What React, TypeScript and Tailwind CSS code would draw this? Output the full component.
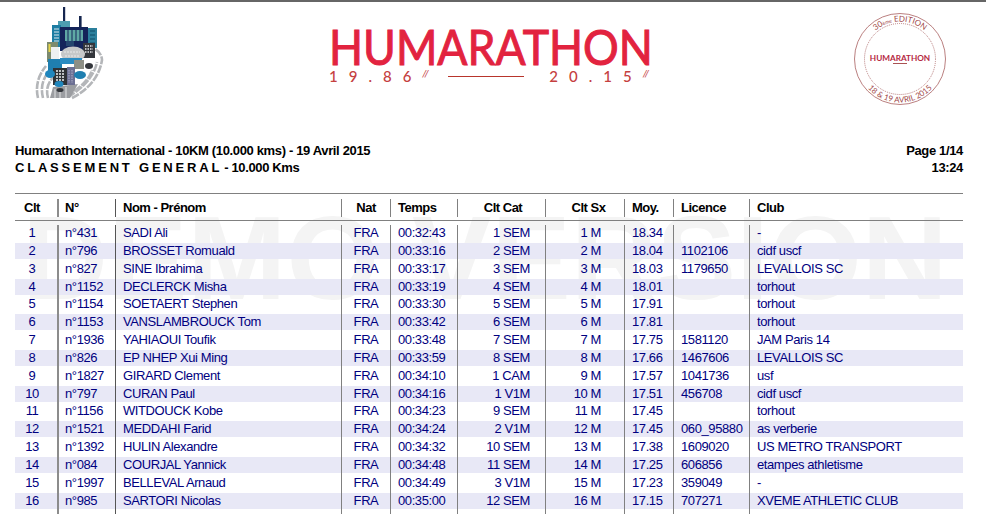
const rows = [
  ['1', 'n°431', 'SADI Ali', '00:32:43', '1 SEM', '1 M', '18.34', '', '-'],
  ['2', 'n°796', 'BROSSET Romuald', '00:33:16', '2 SEM', '2 M', '18.04', '1102106', 'cidf uscf'],
  ['3', 'n°827', 'SINE Ibrahima', '00:33:17', '3 SEM', '3 M', '18.03', '1179650', 'LEVALLOIS SC'],
  ['4', 'n°1152', 'DECLERCK Misha', '00:33:19', '4 SEM', '4 M', '18.01', '', 'torhout'],
  ['5', 'n°1154', 'SOETAERT Stephen', '00:33:30', '5 SEM', '5 M', '17.91', '', 'torhout'],
  ['6', 'n°1153', 'VANSLAMBROUCK Tom', '00:33:42', '6 SEM', '6 M', '17.81', '', 'torhout'],
  ['7', 'n°1936', 'YAHIAOUI Toufik', '00:33:48', '7 SEM', '7 M', '17.75', '1581120', 'JAM Paris 14'],
  ['8', 'n°826', 'EP NHEP Xui Ming', '00:33:59', '8 SEM', '8 M', '17.66', '1467606', 'LEVALLOIS SC'],
  ['9', 'n°1827', 'GIRARD Clement', '00:34:10', '1 CAM', '9 M', '17.57', '1041736', 'usf'],
  ['10', 'n°797', 'CURAN Paul', '00:34:16', '1 V1M', '10 M', '17.51', '456708', 'cidf uscf'],
  ['11', 'n°1156', 'WITDOUCK Kobe', '00:34:23', '9 SEM', '11 M', '17.45', '', 'torhout'],
  ['12', 'n°1521', 'MEDDAHI Farid', '00:34:24', '2 V1M', '12 M', '17.45', '060_95880', 'as verberie'],
  ['13', 'n°1392', 'HULIN Alexandre', '00:34:32', '10 SEM', '13 M', '17.38', '1609020', 'US METRO TRANSPORT'],
  ['14', 'n°084', 'COURJAL Yannick', '00:34:48', '11 SEM', '14 M', '17.25', '606856', 'etampes athletisme'],
  ['15', 'n°1997', 'BELLEVAL Arnaud', '00:34:49', '3 V1M', '15 M', '17.23', '359049', '-'],
  ['16', 'n°985', 'SARTORI Nicolas', '00:35:00', '12 SEM', '16 M', '17.15', '707271', 'XVEME ATHLETIC CLUB'],
];

const gridCols = 'grid grid-cols-[42px_58px_226px_49px_67px_88px_79px_49px_76px_214px]';
const sep = 'border-l border-[#808080]';
const sepThick = 'border-l-2 border-[#8c8c8c]';
const sepDark = 'border-l border-[#555]';

function CityLogo() {
  return (
    <svg viewBox="30 2 80 105" className="w-[80px] h-[105px]">
      {/* road swirl */}
      <g fill="none" stroke="#b4b6b9" strokeWidth="2.6" strokeDasharray="8 1.2">
        <path d="M38 98 C36 90 36 78 46 66" />
        <path d="M43 98 C41 90 41 80 50 70" />
        <path d="M48 98 C46 90 47 84 54 76" />
        <path d="M72 98 C84 92 99 80 102 60 C102 56 99 51 95 49" />
        <path d="M68 97 C80 90 94 78 97 62" />
        <path d="M74 91 C82 86 90 78 92 70" />
      </g>
      <path d="M50 98 L53 87 L78 84 L70 98 Z" fill="#9b9da1" />
      <path d="M55 98 V89 M60 98 V88 M66 98 V87" stroke="#e2e3e4" strokeWidth="1" />
      {/* antennas */}
      <rect x="63" y="7" width="2.2" height="24" fill="#16264f" />
      <rect x="79" y="16" width="2.6" height="16" fill="#16264f" />
      {/* back row */}
      <rect x="58" y="21" width="12" height="7" fill="#4d9db0" />
      <rect x="52" y="25" width="9" height="22" fill="#1d7da3" />
      <path d="M54 29 h5 M54 32 h5 M54 35 h5 M54 38 h5 M54 41 h5" stroke="#dbe8ee" strokeWidth="1.2" />
      <rect x="60" y="27" width="28" height="24" fill="#14245a" />
      <rect x="65" y="30" width="18" height="11" fill="#5fa8a4" />
      <path d="M68 30 v11 M72 30 v11 M76 30 v11 M80 30 v11" stroke="#14245a" strokeWidth="1" />
      <rect x="66" y="41" width="8" height="5" fill="#24466f" />
      <rect x="88" y="28" width="9" height="20" fill="#2b7f9c" />
      <path d="M90 31 h5 M90 35 h5 M90 39 h5 M90 43 h5" stroke="#0f4d66" strokeWidth="1.2" />
      {/* middle row */}
      <rect x="47" y="42" width="11" height="20" fill="#7c8a6e" />
      <rect x="48.5" y="44" width="2" height="8" fill="#e8d54a" />
      <rect x="51" y="47" width="8" height="13" fill="#eef0f1" />
      <rect x="83" y="43" width="12" height="15" fill="#33363b" />
      <path d="M85 46 h8 M85 49 h8 M85 52 h8" stroke="#e6e8ea" strokeWidth="1.3" strokeDasharray="1.5 1" />
      <ellipse cx="73" cy="54" rx="12" ry="7.5" fill="#c6c8c9" />
      <path d="M64 52 h16 M65 56 h15" stroke="#e8e9ea" strokeWidth="1" strokeDasharray="2 1" />
      {/* front row */}
      <rect x="48" y="59" width="14" height="13" fill="#1f7fb0" />
      <rect x="60" y="58" width="22" height="6" fill="#2b8cc2" />
      <rect x="74" y="60" width="10" height="9" fill="#8d8f86" />
      <rect x="53" y="68" width="14" height="17" fill="#2f3236" />
      <path d="M56 71 h8 M56 74 h8 M56 77 h8 M56 80 h8" stroke="#eceef0" strokeWidth="1.4" strokeDasharray="2 1" />
      <rect x="67" y="67" width="8" height="18" fill="#6c6f93" />
      <path d="M69 70 v13 M72 70 v13" stroke="#c5c7da" strokeWidth="0.8" strokeDasharray="1.5 1" />
      <ellipse cx="80" cy="75" rx="6" ry="4" fill="#1f7fb0" />
      <ellipse cx="89" cy="66" rx="4" ry="3" fill="#33363b" />
      <ellipse cx="50" cy="74" rx="5" ry="4" fill="#1f86bd" />
      <ellipse cx="59" cy="84" rx="4.5" ry="3" fill="#1f86bd" />
      <ellipse cx="60" cy="90" rx="3.5" ry="2" fill="#33363b" />
    </svg>
  );
}

function MainLogo() {
  return (
    <div className="w-[320px] text-[#e2233f] font-['Lato',sans-serif]">
      <div className="text-[48px] leading-[40px] h-[40px] font-normal origin-left scale-x-[0.93] [-webkit-text-stroke:1px_#e2233f] whitespace-nowrap">HUMARATHON</div>
      <div className="flex items-center mt-[2px] text-[#c5403f] text-[15px] leading-[15px] font-medium">
        <span className="w-[119px] tracking-[11px] whitespace-nowrap">19.86<sup className="text-[10px] tracking-[0] italic font-normal">//</sup></span>
        <span className="w-[77px] h-px bg-[#b8352c]" />
        <span className="ml-[25px] tracking-[11px] whitespace-nowrap">20.15<sup className="text-[10px] tracking-[0] italic font-normal">//</sup></span>
      </div>
    </div>
  );
}

function Stamp() {
  return (
    <svg viewBox="0 0 94 94" className="w-[94px] h-[94px] font-['Lato',sans-serif]">
      <defs>
        <path id="stamp-top" d="M9.5 47 A37.5 37.5 0 0 1 84.5 47" />
        <path id="stamp-bottom" d="M3.5 47 A43.5 43.5 0 0 0 90.5 47" />
      </defs>
      <circle cx="47" cy="47" r="45.5" fill="none" stroke="#a8605f" strokeWidth="0.8" />
      <circle cx="47" cy="47" r="35.5" fill="none" stroke="#b87c7c" strokeWidth="1" strokeDasharray="1 1" />
      <text fontSize="8" fill="#a04848">
        <textPath href="#stamp-top" startOffset="50%" textAnchor="middle">
          30<tspan fontSize="5">ème</tspan> EDITION
        </textPath>
      </text>
      <text fontSize="8" fill="#a04848">
        <textPath href="#stamp-bottom" startOffset="50%" textAnchor="middle">18 &amp; 19 AVRIL 2015</textPath>
      </text>
      <text x="47" y="49" fontSize="8.2" fontWeight="700" textAnchor="middle" fill="#b5283f">HUMARATHON</text>
      <rect x="40" y="51" width="14" height="0.9" fill="#a04040" />
    </svg>
  );
}

export default function App() {
  return (
    <div className="w-[986px] h-[514px] overflow-hidden bg-white font-['Liberation_Sans',Arial,sans-serif] text-black border-t-2 border-[#666]">
      {/* logos */}
      <div className="flex h-[140px] items-start">
        <div className="ml-[30px] w-[299px]"><CityLogo /></div>
        <div className="mt-[25px] w-[524px]"><MainLogo /></div>
        <div className="mt-[10px]"><Stamp /></div>
      </div>

      {/* title */}
      <div className="flex justify-between pl-[15px] pr-[23px] text-[13px] leading-[17px] font-bold tracking-[-0.35px]">
        <div>
          <div>Humarathon International - 10KM (10.000 kms) - 19 Avril 2015</div>
          <div><span className="tracking-[2.8px]">CLASSEMENT GENERAL</span><span className="ml-[2px]">- 10.000 Kms</span></div>
        </div>
        <div className="text-right">
          <div>Page 1/14</div>
          <div>13:24</div>
        </div>
      </div>

      {/* table */}
      <div className="relative ml-[15px] w-[948px] mt-[17px]">
        <div className="absolute left-[7px] top-[22px] text-[#f4f4f4] text-[119px] leading-[85px] font-bold whitespace-nowrap">DEMO VERSION</div>

        <div className={`relative ${gridCols} h-[28px] border-y border-[#808080] items-center pt-px text-[13px] font-bold tracking-[-0.5px]`}>
          <div className="pr-[8px] text-center">Clt</div>
          <div className={`${sepThick} pl-[6px] h-[18px] leading-[18px]`}>N°</div>
          <div className={`${sepDark} pl-[7px] h-[18px] leading-[18px]`}>Nom - Prénom</div>
          <div className={`${sep} text-center h-[18px] leading-[18px]`}>Nat</div>
          <div className={`${sep} pl-[7px] h-[18px] leading-[18px]`}>Temps</div>
          <div className={`${sep} pl-[3px] text-center h-[18px] leading-[18px]`}>Clt Cat</div>
          <div className={`${sep} pl-[7px] text-center h-[18px] leading-[18px]`}>Clt Sx</div>
          <div className={`${sep} pl-[7px] h-[18px] leading-[18px]`}>Moy.</div>
          <div className={`${sep} pl-[7px] h-[18px] leading-[18px]`}>Licence</div>
          <div className={`${sep} pl-[7px] h-[18px] leading-[18px]`}>Club</div>
        </div>

        <div className="relative pt-[4px] text-[13px] leading-[16px] text-[#000080] tracking-[-0.4px]">
          {rows.map((r, i) => (
            <div
              key={r[0]}
              className={`${gridCols} h-[17.857px] ${i % 2 === 1 ? 'bg-[linear-gradient(#e8e8f6,#e8e8f6)] bg-no-repeat bg-[length:100%_16px]' : ''}`}
            >
              <div className="pr-[8px] text-center">{r[0]}</div>
              <div className={`${sepThick} pl-[6px]`}>{r[1]}</div>
              <div className={`${sepDark} pl-[7px]`}>{r[2]}</div>
              <div className={`${sep} text-center`}>FRA</div>
              <div className={`${sep} pl-[7px]`}>{r[3]}</div>
              <div className={`${sep} pr-[15px] text-right`}>{r[4]}</div>
              <div className={`${sep} pr-[23px] text-right`}>{r[5]}</div>
              <div className={`${sep} pl-[7px]`}>{r[6]}</div>
              <div className={`${sep} pl-[7px]`}>{r[7]}</div>
              <div className={`${sep} pl-[7px]`}>{r[8]}</div>
            </div>
          ))}
          <div className={`${gridCols} h-[18px]`}>
            <div />
            <div className={sepThick} />
            <div className={sepDark} />
            <div className={sep} />
            <div className={sep} />
            <div className={sep} />
            <div className={sep} />
            <div className={sep} />
            <div className={sep} />
            <div className={sep} />
          </div>
        </div>
      </div>
    </div>
  );
}
